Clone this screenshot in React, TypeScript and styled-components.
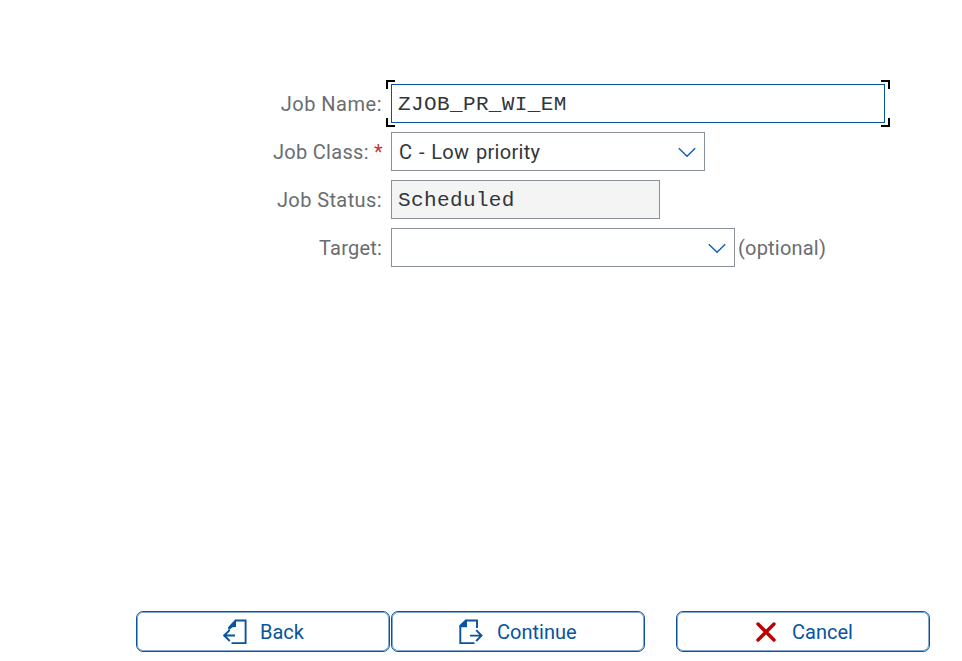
import React from "react";
import styled, { createGlobalStyle } from "styled-components";

const GlobalStyle = createGlobalStyle`
  * { box-sizing: border-box; }
  body { margin: 0; background: #fff; }
`;

const Page = styled.main`
  display: flex;
  flex-direction: column;
  justify-content: space-between;
  width: 962px;
  height: 661px;
  padding: 84px 32px 9px 136px;
  background: #fff;
  font-family: Roboto, "Liberation Sans", sans-serif;
  font-size: 20px;
  line-height: 24px;
  overflow: hidden;
`;

const Form = styled.form`
  display: grid;
  gap: 9px;
`;

const Row = styled.div`
  display: grid;
  grid-template-columns: 246px auto;
  justify-content: start;
  align-items: center;
  column-gap: 9px;
  height: 39px;
`;

const Label = styled.label<{ $spacing: number }>`
  justify-self: end;
  color: #6a6d70;
  white-space: nowrap;
  letter-spacing: ${(p) => p.$spacing}px;
`;

const Required = styled.span`
  margin: 0 -1px 0 0;
  color: #cc3333;
`;

const Control = styled.div`
  display: flex;
  align-items: center;
`;

const Field = styled.div<{ $width: number; $focused?: boolean; $readOnly?: boolean }>`
  position: relative;
  display: flex;
  align-items: center;
  justify-content: space-between;
  width: ${(p) => p.$width}px;
  height: 39px;
  padding: 0 8px 0 7px;
  border: 1px solid ${(p) => (p.$focused ? "#0854a0" : "#89919a")};
  background: ${(p) => (p.$readOnly ? "#f4f4f4" : "#fff")};
  color: #32363a;
`;

const MonoText = styled.span`
  margin-left: -1px;
  padding-top: 2px;
  font-family: "Liberation Mono", monospace;
  font-size: 21px;
  letter-spacing: 0.38px;
  white-space: pre;
`;

const Value = styled.span`
  letter-spacing: 0.3px;
  word-spacing: 1.3px;
`;

const Hint = styled.span`
  margin-left: 3px;
  color: #6a6d70;
  letter-spacing: 0.2px;
`;

const Corner = styled.i<{ $x: "left" | "right"; $y: "top" | "bottom" }>`
  position: absolute;
  ${(p) => p.$x}: -6px;
  ${(p) => p.$y}: -5px;
  width: 9px;
  height: 9px;
  border: 0 solid #000;
  border-${(p) => p.$x}-width: 2px;
  border-${(p) => p.$y}-width: 2px;
`;

const Arrow = styled.svg`
  display: block;
  width: 18px;
  height: 12px;
  margin-left: auto;
`;

const Footer = styled.footer`
  display: flex;
`;

const Button = styled.button<{ $offset?: number; $gap: number; $shift: number }>`
  display: flex;
  align-items: center;
  width: 254px;
  height: 41px;
  margin: 0 0 0 ${(p) => p.$offset ?? 0}px;
  padding: 0 0 0 ${(p) => p.$shift}px;
  gap: ${(p) => p.$gap}px;
  border: 1px solid #0854a0;
  border-radius: 7px;
  box-shadow: inset 0 0 0 1px #84a9cf;
  background: #fff;
  color: #0854a0;
  font: inherit;
`;

const Caption = styled.span<{ $spacing: number }>`
  letter-spacing: ${(p) => p.$spacing}px;
`;

const Icon = styled.svg`
  display: block;
  flex: none;
  fill: none;
  stroke: currentColor;
`;

const Chevron = () => (
  <Arrow viewBox="0 0 18 12" fill="none" stroke="#0a5fb4" strokeWidth="1.4">
    <path d="M.8 2.3 9 10.3 17.2 2.3" />
  </Arrow>
);

const BackIcon = () => (
  <Icon width="24" height="26" viewBox="0 0 24 26" strokeWidth="1.9">
    <path d="M12.5 1.5H22.6V24.1H8.5" />
    <path d="M5.2 10.5V8L12.2 .6H13V8L9.5 8.2 6.8 10.5Z" fill="currentColor" stroke="none" />
    <path d="M12 16.5H1.5M6.8 10.8 1.2 16.5 6.8 22" />
  </Icon>
);

const ContinueIcon = () => (
  <Icon width="24" height="26" viewBox="0 0 24 26" strokeWidth="1.9">
    <path d="M18 9V1.5H7L1.3 7V24.1H15.5" />
    <path d="M.5 8.2V6.5L6.5.8H8V8.2Z" fill="currentColor" stroke="none" />
    <path d="M11 16.6H22M17.2 11.2 22.5 16.6 17.2 22" />
  </Icon>
);

const CancelIcon = () => (
  <Icon width="20" height="20" viewBox="0 0 20 20" strokeWidth="3.4" strokeLinecap="round" color="#bb0000">
    <path d="M2 2 18 18M18 2 2 18" />
  </Icon>
);

export default function App() {
  return (
    <Page>
      <GlobalStyle />
      <Form>
        <Row>
          <Label $spacing={0.5}>Job Name:</Label>
          <Field $width={494} $focused>
            <MonoText>ZJOB_PR_WI_EM</MonoText>
            <Corner $x="left" $y="top" />
            <Corner $x="right" $y="top" />
            <Corner $x="left" $y="bottom" />
            <Corner $x="right" $y="bottom" />
          </Field>
        </Row>
        <Row>
          <Label $spacing={0.3}>
            Job Class: <Required>*</Required>
          </Label>
          <Field $width={314}>
            <Value>C - Low priority</Value>
            <Chevron />
          </Field>
        </Row>
        <Row>
          <Label $spacing={0.4}>Job Status:</Label>
          <Field $width={269} $readOnly>
            <MonoText>Scheduled</MonoText>
          </Field>
        </Row>
        <Row>
          <Label $spacing={0.2}>Target:</Label>
          <Control>
            <Field $width={344}>
              <Chevron />
            </Field>
            <Hint>(optional)</Hint>
          </Control>
        </Row>
      </Form>
      <Footer>
        <Button type="button" $shift={86} $gap={13}>
          <BackIcon />
          <Caption $spacing={0}>Back</Caption>
        </Button>
        <Button type="button" $offset={1} $shift={67} $gap={14}>
          <ContinueIcon />
          <Caption $spacing={0}>Continue</Caption>
        </Button>
        <Button type="button" $offset={31} $shift={79} $gap={16}>
          <CancelIcon />
          <Caption $spacing={0}>Cancel</Caption>
        </Button>
      </Footer>
    </Page>
  );
}
